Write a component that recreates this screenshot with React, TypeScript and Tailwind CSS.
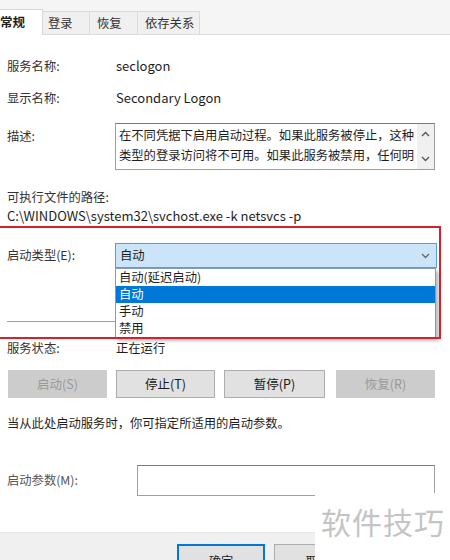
import React from 'react';

const Chevron: React.FC<{ up?: boolean; className?: string }> = ({ up, className }) => (
  <svg width="9" height="6" viewBox="0 0 9 6" className={className}>
    <path d={up ? 'M1 5 L4.5 1.5 L8 5' : 'M1 1 L4.5 4.5 L8 1'} fill="none" stroke="currentColor" strokeWidth="1.3" />
  </svg>
);

const Btn: React.FC<{ label: string; disabled?: boolean; w: string }> = ({ label, disabled, w }) => (
  <div
    className={`${w} h-[28px] flex items-center justify-center text-[12.5px] ${
      disabled ? 'bg-[#cccccc] text-[#9a9a9a]' : 'bg-[#e1e1e1] border border-[#adadad] text-[#1a1a1a]'
    }`}
  >
    {label}
  </div>
);

export default function App() {
  return (
    <div
      className="w-[450px] h-[560px] relative overflow-hidden bg-white text-[#1e1e1e] text-[12.3px]"
      style={{ fontFamily: '"Noto Sans CJK SC", "Noto Sans", sans-serif' }}
    >
      {/* tabs */}
      <div className="h-[35px] bg-[#f5f5f5] flex items-end border-b border-[#dadada]">
        <div className="w-[43px] h-[26px] bg-white border-r border-t border-[#dadada] -mb-px flex items-center justify-end pr-[17px] font-bold text-[12.5px] whitespace-nowrap">
          常规
        </div>
        <div className="w-[47px] h-[23px] bg-[#f0f0f0] border-r border-t border-[#dadada] flex items-center pl-[5px] text-[#333]">
          登录
        </div>
        <div className="w-[48px] h-[23px] bg-[#f0f0f0] border-r border-t border-[#dadada] flex items-center pl-[7px] text-[#333]">
          恢复
        </div>
        <div className="w-[62px] h-[23px] bg-[#f0f0f0] border-r border-t border-[#dadada] flex items-center pl-[7px] text-[#333]">
          依存关系
        </div>
      </div>

      <div className="px-[7px]">
        <div className="mt-[21px] h-[20px] flex items-center">
          <span className="w-[109px] text-[#333]">服务名称:</span>
          <span className="text-[13px]">seclogon</span>
        </div>
        <div className="mt-[12px] h-[20px] flex items-center">
          <span className="w-[109px] text-[#333]">显示名称:</span>
          <span className="text-[13px]">Secondary Logon</span>
        </div>
        <div className="mt-[15px] flex">
          <span className="w-[108px] pt-[4px] text-[#333]">描述:</span>
          <div className="w-[320px] h-[47px] border border-[#a0a0a0] border-t-[#7a7a7a] flex">
            <div className="flex-1 pl-[3px] pt-[1px] leading-[20px] text-[12.3px] overflow-hidden">
              在不同凭据下启用启动过程。如果此服务被停止，这种类型的登录访问将不可用。如果此服务被禁用，任何明
            </div>
            <div className="w-[17px] bg-[#f0f0f0] flex flex-col items-center justify-between py-[7px] text-[#555]">
              <Chevron up />
              <Chevron />
            </div>
          </div>
        </div>
        <div className="mt-[17px] h-[20px] flex items-center text-[#333]">可执行文件的路径:</div>
        <div className="h-[18px] flex items-center text-[13px]">C:\WINDOWS\system32\svchost.exe -k netsvcs -p</div>

        <div className="mt-[18px] flex items-center">
          <span className="w-[108px] text-[#333]">启动类型(E):</span>
          <div className="w-[322px] h-[25px] bg-[#cce4f7] border border-[#569de5] flex items-center pl-[4px] pr-[6px] justify-between">
            <span>自动</span>
            <Chevron className="text-[#666]" />
          </div>
        </div>
        <div className="mt-[53px] h-px bg-[#a0a0a0] w-[110px]" />
        <div className="mt-[16px] h-[20px] flex items-center">
          <span className="w-[109px] text-[#333]">服务状态:</span>
          <span>正在运行</span>
        </div>

        <div className="mt-[12px] flex items-center pl-[1px]">
          <Btn label="启动(S)" disabled w="w-[99px]" />
          <div className="ml-[9px]"><Btn label="停止(T)" w="w-[99px]" /></div>
          <div className="ml-[9px]"><Btn label="暂停(P)" w="w-[101px]" /></div>
          <div className="ml-[11px]"><Btn label="恢复(R)" disabled w="w-[99px]" /></div>
        </div>
        <div className="mt-[15px] h-[20px] flex items-center">当从此处启动服务时，你可指定所适用的启动参数。</div>

        <div className="mt-[32px] flex items-center">
          <span className="w-[130px] text-[#555]">启动参数(M):</span>
          <div className="w-[298px] h-[31px] border border-[#a0a0a0] border-t-[#7a7a7a]" />
        </div>
      </div>

      {/* footer */}
      <div className="absolute left-0 right-0 top-[532px] bottom-0 bg-[#f0f0f0] border-t border-[#e6e6e6]">
        <div className="flex pl-[177px] pt-[11px] gap-[9px]">
          <div className="w-[88px] h-[28px] bg-[#e1e1e1] border-2 border-[#0078d7] flex justify-center pt-[6px]">确定</div>
          <div className="w-[88px] h-[28px] bg-[#e1e1e1] border border-[#adadad] flex justify-center pt-[7px]">取消</div>
        </div>
      </div>

      {/* dropdown list */}
      <div className="absolute left-[115px] top-[268px] w-[321px] h-[70px] bg-white border border-[#7f9db9] shadow-[3px_3px_3px_rgba(0,0,0,0.25)] flex flex-col">
        <div className="h-[17px] pl-[3px] flex items-center">自动(延迟启动)</div>
        <div className="h-[17px] pl-[3px] flex items-center bg-[#0078d7] text-white">自动</div>
        <div className="h-[17px] pl-[3px] flex items-center">手动</div>
        <div className="h-[17px] pl-[3px] flex items-center">禁用</div>
      </div>

      {/* red annotation */}
      <div className="absolute left-[-2px] top-[226px] w-[443px] h-[113px] border-2 border-[#d7202c]" />

      {/* watermark */}
      <div className="absolute left-[315px] top-[493px] w-[135px] h-[67px] bg-white flex items-start pl-[6px] pt-[10px]">
        <span className="text-[30px] leading-[36px] text-[#c4c4c4] tracking-[1px]">软件技巧</span>
      </div>
    </div>
  );
}
